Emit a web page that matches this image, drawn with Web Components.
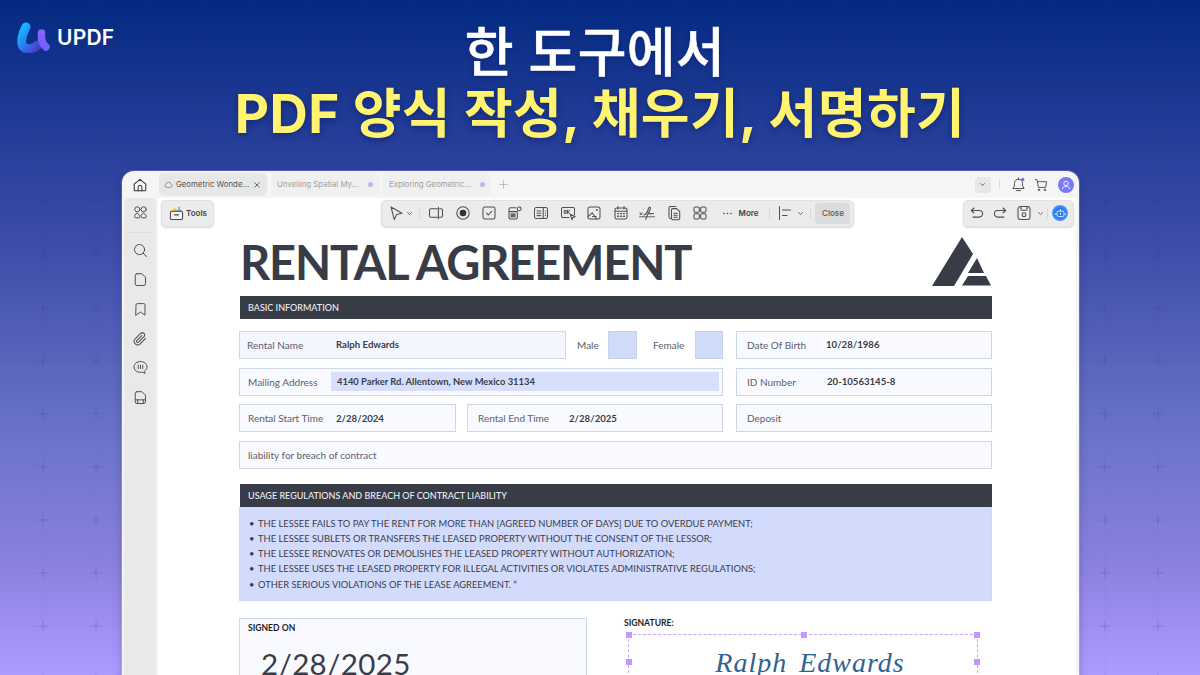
<!DOCTYPE html>
<html lang="ko">
<head>
<meta charset="utf-8">
<title>UPDF</title>
<style>
  html, body { margin: 0; padding: 0; }
  body { width: 1200px; height: 675px; overflow: hidden; font-family: Inter, "Noto Sans CJK KR", sans-serif; }
</style>
</head>
<body>
<promo-page>
  <promo-head></promo-head>
  <app-window>
    <rental-doc></rental-doc>
  </app-window>
</promo-page>

<script>
const ICONS = {
  home: '<path d="M2.2 7.2 8 2.3l5.8 4.9V12.6a1.2 1.2 0 0 1-1.2 1.2H3.4a1.2 1.2 0 0 1-1.2-1.2Z"/><path d="M6.1 13.8V10.3a1.9 1.9 0 0 1 3.8 0v3.5"/>',
  apps: '<circle cx="4.6" cy="4.6" r="2.7"/><circle cx="11.4" cy="4.6" r="2.7"/><path d="M4.6 8.7l2.7 2.6v1.2a1.2 1.2 0 0 1-1.2 1.2H3.100a1.200 1.200 0 0 1-1.200-1.200v-1.200Z"/><path d="M11.400 8.700l2.700 2.600v1.200a1.200 1.200 0 0 1-1.200 1.200h-3a1.200 1.200 0 0 1-1.200-1.200v-1.200Z"/>',
  search: '<circle cx="7" cy="7" r="5.4"/><path d="M11 11l3.300 3.500"/>',
  page: '<path d="M4.200 1.800h5.300l3.800 3.800v7a1.800 1.800 0 0 1-1.800 1.800H4.200a1.800 1.800 0 0 1-1.800-1.800V3.600a1.800 1.800 0 0 1 1.800-1.800Z"/>',
  bookmark: '<path d="M3.200 3a1.300 1.300 0 0 1 1.300-1.300h7A1.300 1.300 0 0 1 12.800 3v11L8 10.700 3.200 14Z"/>',
  clip: '<path vector-effect="non-scaling-stroke" transform="scale(.667)" d="M21.440 11.050l-9.190 9.190a6 6 0 0 1-8.490-8.490l9.190-9.190a4 4 0 0 1 5.660 5.660l-9.200 9.190a2 2 0 0 1-2.830-2.830l8.490-8.480"/>',
  comment: '<path d="M8 1.600c3.900 0 6.900 2.500 6.900 5.800 0 2-1 3.600-2.600 4.600l.5 2.300-2.700-1.400c-.6.200-1.300.3-2.100.3-3.900 0-6.900-2.500-6.900-5.800C1.100 4.100 4.100 1.600 8 1.600Z"/><path d="M5.600 5.500v3.600M8 5.500v3.600M10.400 5.500v3.600"/>',
  filesave: '<path d="M4.200 1.800h5.300l3.800 3.800v7a1.800 1.800 0 0 1-1.800 1.800H4.200a1.800 1.800 0 0 1-1.800-1.800V3.600a1.800 1.800 0 0 1 1.800-1.800Z"/><path d="M2.400 10.500h11M5 14.200v-3.700M11 14.200v-3.700"/>',
  cloud: '<path d="M4.500 13a3 3 0 0 1-.6-5.900 4.200 4.200 0 0 1 8.200 0A3 3 0 0 1 11.500 13Z"/>',
  cursor: '<path d="M3 2l11 6.200-5.300 1.200L6.300 14.500Z"/>',
  textbox: '<path d="M9.300 3.800H3a1.500 1.500 0 0 0-1.500 1.500v5.400A1.500 1.500 0 0 0 3 12.200h6.300M11.600 3.800H13a1.500 1.500 0 0 1 1.500 1.500v5.400a1.500 1.500 0 0 1-1.500 1.500h-1.400M10.400 2.200v11.600"/>',
  record: '<circle cx="8" cy="8" r="6.200"/><circle cx="8" cy="8" r="3.300" fill="#333" stroke="none"/>',
  check: '<rect x="2" y="2" width="12" height="12" rx="1.800"/><path d="M5.500 8.200l1.900 1.800 3.200-3.700"/>',
  form: '<path d="M8.800 2.800H3.500A1.500 1.500 0 0 0 2 4.300v8.200A1.500 1.500 0 0 0 3.500 14h5.300A1.500 1.500 0 0 0 10.300 12.500V7.200M2 6.600h8.300"/><rect x="3.500" y="8.400" width="5" height="4" fill="#666" stroke="none"/><circle cx="12.200" cy="3.900" r="1.900"/>',
  list: '<rect x="1.500" y="2.500" width="13" height="11" rx="1.800"/><path d="M10.200 2.500v11M4 6h3.800M4 8.300h3.800M4 10.600h3.800M12.300 6h.4M12.300 8.300h.4M12.300 10.600h.4"/>',
  okbox: '<path d="M9 12.500H3A1.500 1.500 0 0 1 1.500 11V4A1.500 1.500 0 0 1 3 2.500h10A1.500 1.500 0 0 1 14.500 4v6"/><path d="M4.600 5.500h1.500v2.800H4.600ZM7.400 5.200v3.300M9.800 5.200 7.500 7l2.300 1.500" stroke-width="1"/><path d="M10.300 9.300l4.800 2.500-2.200.6-.9 2.300Z"/>',
  image: '<rect x="2" y="2" width="12" height="12" rx="1.800"/><circle cx="10.800" cy="5" r="1" fill="#555" stroke="none"/><path d="M2.200 11.300 6.200 7.800 10.600 14M6.500 11.500h3.600"/>',
  calendar: '<rect x="2" y="3" width="12" height="11" rx="1.800"/><path d="M2 6.300h12M5 1.500v2.600M11 1.500v2.600"/><path d="M4.700 8.600h.9M7.600 8.600h.9M10.500 8.600h.9M4.700 11.200h.9M7.600 11.200h.9M10.500 11.200h.9" stroke-width="1.400"/>',
  sign: '<path d="M.5 11.800h15" stroke-width=".9"/><path d="M1 7.600l2.200 2.200M3.200 7.600 1 9.800" stroke-width="1"/><path d="M5 10c1.700-.4 3.600-3.200 4.300-6 .4-1.500 1.600-2.500 2.100-1.400C12 3.900 9.600 7.200 8.500 10c-.7 1.800-1.300 3.700-1.900 4.500M9.400 8.700c1.300-.6 1.800-.5 1.800.5 1-.8 2-1 3.500-.5"/>',
  copy: '<path d="M4.700 13.500a1.700 1.700 0 0 1-1.700-1.700V3a1.500 1.500 0 0 1 1.500-1.500h5.300"/><path d="M7 3.600h3.700l3 3v6.600A1.500 1.500 0 0 1 12.200 14.700H7a1.500 1.500 0 0 1-1.500-1.500V5.100A1.500 1.500 0 0 1 7 3.600Z"/><path d="M7.800 8.300h3.500M7.800 10.300h3.500M7.800 12.300h3.500"/>',
  grid: '<rect x="2" y="2" width="5.300" height="5.300" rx="1.300"/><rect x="8.700" y="2" width="5.300" height="5.300" rx="1.300"/><rect x="2" y="8.700" width="5.300" height="5.300" rx="1.300"/><rect x="8.700" y="8.700" width="5.300" height="5.300" rx="1.300"/>',
  dots: '<circle cx="3" cy="8" r="1.200" fill="#444" stroke="none"/><circle cx="8" cy="8" r="1.200" fill="#444" stroke="none"/><circle cx="13" cy="8" r="1.200" fill="#444" stroke="none"/>',
  align: '<path d="M2.500 1.500v13M5.500 5h8M5.500 10.500h4.500"/>',
  chevron: '<path d="M4.600 6.400 8 9.800l3.400-3.400" stroke-width="1.500"/>',
  plus: '<path d="M8 1.500v13M1.500 8h13"/>',
  close: '<path d="M3.500 3.500l9 9M12.500 3.500l-9 9"/>',
  undo: '<path d="M5 3 2.300 5.500 5 8M2.500 5.500h7.800a3.300 3.300 0 0 1 0 6.600H4"/>',
  redo: '<path d="M11 3l2.700 2.500L11 8M13.500 5.500H5.700a3.300 3.300 0 0 0 0 6.600H12"/>',
  save: '<rect x="2" y="1.500" width="12" height="13" rx="2.400"/><path d="M5 1.500v3a.8.8 0 0 0 .8.800h4.400a.8.8 0 0 0 .8-.8v-3"/><circle cx="8" cy="9.700" r="1.900"/>',
  bell: '<path d="M8 2.300c-2.700 0-4.300 2-4.300 4.600v2.600L2 12.300h12l-1.700-2.800V6.900C12.300 4.300 10.700 2.300 8 2.300Z"/><path d="M6 14.500h4M8 .9v1.300"/><circle cx="12.600" cy="2.600" r="1.700" fill="#6c6cf8" stroke="none"/>',
  cart: '<path d="M1.500 1.800h1.900L5 10.800h8.300l1.100-6.600H3.900"/><circle cx="5.600" cy="13.500" r=".9"/><circle cx="12.400" cy="13.500" r=".9"/>'
};

class UiIcon extends HTMLElement {
  connectedCallback() {
    const size = this.getAttribute('size') || 16;
    const sw = this.getAttribute('sw') || 1.05;
    const col = this.getAttribute('color') || '#4f4f4f';
    this.attachShadow({ mode: 'open' }).innerHTML = `
      <style>
        :host { display: inline-flex; flex: none; width: ${size}px; height: ${size}px; }
        svg { width: 100%; height: 100%; fill: none; stroke: ${col}; stroke-width: ${sw}; stroke-linecap: round; stroke-linejoin: round; }
      </style>
      <svg viewBox="0 0 16 16">${ICONS[this.getAttribute('name')] || ''}</svg>`;
  }
}

class PromoPage extends HTMLElement {
  constructor() {
    super();
    this.attachShadow({ mode: 'open' });
  }
  connectedCallback() {
    this.shadowRoot.innerHTML = `
      <style>
        :host {
          display: block;
          position: relative;
          width: 1200px;
          height: 675px;
          overflow: hidden;
          background: linear-gradient(180deg, #032a82 0%, #2c429e 25%, #3d4ca8 36%, #6b74c8 65%, #8a80de 83%, #ae9bff 100%);
        }
        .marks { position: absolute; inset: 0; width: 100%; height: 100%; }
        .flow { position: relative; display: flex; flex-direction: column; height: 100%; }
      </style>
      <svg class="marks">
        <defs>
          <pattern id="p" x="16.500" y="15.500" width="53.100" height="53.100" patternUnits="userSpaceOnUse">
            <path d="M26.500 0V53.100M0 26.500H53.100" stroke="#2a2a80" stroke-opacity=".035" fill="none"/>
            <path d="M26.500 22v9M22 26.500h9" stroke="#2a2a80" stroke-opacity=".16" stroke-width="1.500" fill="none"/>
          </pattern>
        </defs>
        <rect width="1200" height="675" fill="url(#p)"/>
      </svg>
      <div class="flow"><slot></slot></div>`;
  }
}

class PromoHead extends HTMLElement {
  constructor() {
    super();
    this.attachShadow({ mode: 'open' });
  }
  connectedCallback() {
    this.shadowRoot.innerHTML = `
      <style>
        :host {
          display: grid;
          grid-template-columns: 1fr auto 1fr;
          height: 171px;
          box-sizing: border-box;
          padding: 22px 0 0 0;
          flex: none;
        }
        .logo { display: flex; align-items: flex-start; gap: 6px; margin: -2px 0 0 15px; }
        .logo svg { width: 36px; height: 33px; flex: none; }
        .logo span { color: #fff; font: 600 21px/33px Inter, sans-serif; letter-spacing: .2px; margin-top: 1px; }
        h1 { margin: 0; text-align: center; font-family: Inter, "Noto Sans CJK KR", sans-serif; font-weight: 700; letter-spacing: .4px; white-space: nowrap; }
        .a { display: block; color: #fff; font-size: 53px; line-height: 62px; font-weight: 500; padding-right: 10px; -webkit-text-stroke: .6px #fff; text-shadow: 0 2px 5px rgba(5,15,80,.35); }
        .b { display: block; color: #fff36f; font-size: 53px; line-height: 60px; text-shadow: 0 2px 6px rgba(5,15,80,.45); }
      </style>
      <div class="logo">
        <svg viewBox="0 0 36 33">
          <defs>
            <linearGradient id="lg" x1="0" y1="0" x2="1" y2="1">
              <stop offset="0" stop-color="#12bdfc"/><stop offset=".5" stop-color="#2b78f0"/><stop offset="1" stop-color="#4a3fc8"/>
            </linearGradient>
            <linearGradient id="lg2" x1="0" y1="0" x2="0" y2="1">
              <stop offset="0" stop-color="#8762ff"/><stop offset="1" stop-color="#7460ff"/>
            </linearGradient>
          </defs>
          <path d="M11 7C8 13 6 19 7 24c1 6 10 6 16 1" fill="none" stroke="url(#lg)" stroke-width="9" stroke-linecap="round"/>
          <path d="M26.500 13c-.5 6 .5 11 4.500 14" fill="none" stroke="url(#lg2)" stroke-width="7.500" stroke-linecap="round"/>
        </svg>
        <span>UPDF</span>
      </div>
      <h1><span class="a">한 도구에서</span><span class="b">PDF 양식 작성, 채우기, 서명하기</span></h1>
      <div></div>`;
  }
}

class TabItem extends HTMLElement {
  constructor() {
    super();
    this.attachShadow({ mode: 'open' });
  }
  connectedCallback() {
    const active = this.hasAttribute('active');
    this.shadowRoot.innerHTML = `
      <style>
        :host {
          display: flex;
          align-items: center;
          width: 108px;
          height: 23px;
          box-sizing: border-box;
          padding: 0 6px 0 ${active ? 5 : 6}px;
          border-radius: 5px;
          background: ${active ? '#e7e7e7' : '#f0f0f0'};
          color: ${active ? '#555' : '#a0a0a0'};
          font: 400 7.800px/1 Inter, sans-serif;
          white-space: nowrap;
        }
        .txt { flex: 1; padding-left: ${active ? '3px' : '0'}; }
        .dot { width: 5px; height: 5px; border-radius: 50%; background: #b6b6f6; }
      </style>
      ${active ? '<ui-icon name="cloud" size="9" color="#666"></ui-icon>' : ''}
      <span class="txt"><slot></slot></span>
      ${active ? '<ui-icon name="close" size="8" color="#555" sw="1.700"></ui-icon>' : '<span class="dot"></span>'}`;
  }
}

class ToolGroup extends HTMLElement {
  constructor() {
    super();
    this.attachShadow({ mode: 'open' });
  }
  connectedCallback() {
    this.shadowRoot.innerHTML = `
      <style>
        :host {
          display: flex;
          align-items: center;
          flex: none;
          height: 27px;
          box-sizing: border-box;
          background: #ebebeb;
          border-radius: 5px;
          border: 1px solid #e2e2e2;
          box-shadow: 0 1px 2px rgba(0,0,0,.16);
          color: #444;
          font: 600 8px/1 Inter, sans-serif;
        }
      </style>
      <slot></slot>`;
  }
}

class AppWindow extends HTMLElement {
  constructor() {
    super();
    this.attachShadow({ mode: 'open' });
  }
  connectedCallback() {
    const tool = (name, w) => `<span class="t" style="width:${w}px"><ui-icon name="${name}" size="16"></ui-icon></span>`;
    const chev = (w) => `<span class="t" style="width:${w}px"><ui-icon name="chevron" size="9"></ui-icon></span>`;
    this.shadowRoot.innerHTML = `
      <style>
        :host {
          display: block;
          flex: none;
          width: 957px;
          height: 560px;
          margin-left: 122px;
          background: #f5f5f5;
          border-radius: 12px 12px 0 0;
          box-shadow: 0 0 0 1px rgba(255,255,255,.18), 0 2px 10px rgba(10,20,90,.25);
          overflow: hidden;
        }
        .tabs { display: flex; align-items: center; height: 27px; box-sizing: border-box; padding: 0 5px 0 10px; }
        .tabs .home { margin-right: 11px; }
        .tabs tab-item { margin-right: 4px; }
        .add { margin-left: 4px; }
        .right { margin-left: auto; display: flex; align-items: center; }
        .drop { display: flex; align-items: center; justify-content: center; width: 16px; height: 16px; background: #e7e7e7; border-radius: 4px; }
        .rule { width: 1px; height: 9px; background: #dcdcdc; flex: none; }
        .avatar { display: flex; align-items: center; justify-content: center; width: 16px; height: 16px; border-radius: 50%; background: #7b7bfa; margin-left: 10px; }
        .body { display: flex; height: 533px; }
        .rail {
          flex: none;
          width: 32px;
          margin: 0 2px 0 2px;
          padding-top: 7px;
          box-sizing: border-box;
          background: #e9e9e9;
          border-radius: 5px 5px 0 0;
          display: flex;
          flex-direction: column;
          align-items: center;
        }
        .rail ui-icon { margin-bottom: 14.700px; }
        .rail .sep { width: 24px; height: 1px; background: #dedede; margin: -3px 0 10px; }
        .main { flex: none; width: 918px; background: #fff; position: relative; }
        .bar { display: flex; align-items: center; height: 29px; padding: 1px 0 0 3px; box-sizing: border-box; }
        .tools { width: 53px; padding-left: 7px; gap: 2px; box-sizing: border-box; }
        .mid { width: 473px; margin-left: 167px; padding-left: 6px; box-sizing: border-box; }
        .end { width: 111px; margin-left: 109px; padding-left: 5px; box-sizing: border-box; }
        .t { display: inline-flex; justify-content: center; flex: none; }
        .v { width: 1px; height: 9px; background: #d8d8d8; flex: none; }
        .closeb { display: flex; align-items: center; justify-content: center; width: 35px; height: 21px; border-radius: 3px; background: #dcdcdc; color: #555; font-weight: 500; margin-left: 4px; }
        .ai { display: flex; align-items: center; justify-content: center; width: 16px; height: 16px; border-radius: 50%; background: radial-gradient(circle, #2b7cf0 45%, #7cc4ff 100%); margin-left: 4px; }
      </style>
      <div class="tabs">
        <ui-icon class="home" name="home" size="16" color="#333"></ui-icon>
        <tab-item active>Geometric Wonde...</tab-item>
        <tab-item>Unveiling Spatial My...</tab-item>
        <tab-item>Exploring Geometric...</tab-item>
        <ui-icon class="add" name="plus" size="9" color="#aaa" sw="1.300"></ui-icon>
        <div class="right">
          <span class="drop"><ui-icon name="chevron" size="9"></ui-icon></span>
          <span class="rule" style="margin:0 11px 0 8px"></span>
          <ui-icon name="bell" size="15"></ui-icon>
          <ui-icon name="cart" size="14" style="margin-left:8.500px"></ui-icon>
          <span class="avatar">
            <svg width="10" height="10" viewBox="0 0 16 16" fill="none" stroke="#fff" stroke-width="1.400"><circle cx="8" cy="5.500" r="3.500"/><path d="M2 14.500c.6-3 3-4.500 6-4.500s5.400 1.500 6 4.500"/></svg>
          </span>
        </div>
      </div>
      <div class="body">
        <div class="rail">
          <ui-icon name="apps" size="15"></ui-icon>
          <span class="sep"></span>
          <ui-icon name="search" size="15"></ui-icon>
          <ui-icon name="page" size="15"></ui-icon>
          <ui-icon name="bookmark" size="15"></ui-icon>
          <ui-icon name="clip" size="14"></ui-icon>
          <ui-icon name="comment" size="15"></ui-icon>
          <ui-icon name="filesave" size="15"></ui-icon>
        </div>
        <div class="main">
          <div class="bar">
            <tool-group class="tools">
              <svg width="15" height="15" viewBox="0 0 16 16" fill="none" style="flex:none">
                <path d="M2.500 5.500C3 3.500 4.500 3.800 5.200 2.800c1.200-1 3-.6 3.800 2.700Z" fill="#f7c62f"/>
                <path d="M9 5.500c.2-1.500 1.500-2.200 2.800-1.900 1 .3 1.700 1 1.700 1.900Z" fill="#35b4e8"/><circle cx="10.800" cy="2" r="1" fill="#4a8fe8"/>
                <rect x="1.500" y="5.500" width="13" height="9" rx="1.800" stroke="#444" stroke-width="1.100" fill="#f4f4f4"/><path d="M5.500 9.500h5" stroke="#444" stroke-width="1.300"/>
              </svg>
              <span>Tools</span>
            </tool-group>
            <tool-group class="mid">
              ${tool('cursor', 16)}${chev(11)}<span class="v" style="margin:0 3px 0 4px"></span>
              ${tool('textbox', 26.500)}${tool('record', 26)}${tool('check', 26)}${tool('form', 26.500)}${tool('list', 26.500)}${tool('okbox', 26.500)}${tool('image', 26.500)}${tool('calendar', 26.500)}${tool('sign', 26.500)}${tool('copy', 26.500)}${tool('grid', 26.500)}
              <span class="t" style="width:12px;margin-left:8px"><ui-icon name="dots" size="11"></ui-icon></span>
              <span style="margin-left:5px">More</span>
              <span class="v" style="margin:0 8px 0 11px"></span>
              ${tool('align', 14)}${chev(16)}
              <span class="v" style="margin-left:2px"></span>
              <span class="closeb">Close</span>
            </tool-group>
            <tool-group class="end">
              ${tool('undo', 16)}<span style="width:7px"></span>${tool('redo', 16)}<span style="width:8px"></span>${tool('save', 16)}${chev(16)}
              <span class="v" style="margin-left:-1px"></span>
              <span class="ai"><svg width="11" height="11" viewBox="0 0 16 16" fill="none" stroke="#e6f2ff" stroke-width="1.300"><rect x="3" y="4.500" width="10" height="8" rx="2"/><path d="M8 4.500V2M1 7.500v2.500M15 7.500v2.500M8 7v3"/></svg></span>
            </tool-group>
          </div>
          <slot></slot>
        </div>
      </div>`;
  }
}

class SectionBar extends HTMLElement {
  constructor() {
    super();
    this.attachShadow({ mode: 'open' });
  }
  connectedCallback() {
    this.shadowRoot.innerHTML = `
      <style>
        :host {
          display: flex;
          align-items: center;
          height: 22.500px;
          margin-left: 1px;
          padding-left: 8px;
          background: #383c47;
          color: #eceef4;
          font: 500 9px/1 var(--doc-font);
        }
      </style>
      <slot></slot>`;
  }
}

class FormField extends HTMLElement {
  constructor() {
    super();
    this.attachShadow({ mode: 'open' });
  }
  connectedCallback() {
    const w = this.getAttribute('label-w') || 79;
    const bg = this.getAttribute('bg') || '#f9faff';
    const pad = this.getAttribute('pad') || 8;
    this.shadowRoot.innerHTML = `
      <style>
        :host {
          display: flex;
          align-items: center;
          box-sizing: border-box;
          height: 28px;
          padding-left: ${pad}px;
          border: 1px solid #cdd7e6;
          background: ${bg};
          font: 400 10px/1 var(--doc-font);
          color: #5d606b;
          white-space: nowrap;
        }
        .l { flex: none; width: ${w}px; }
        .v { color: #3a3d48; font-weight: 700; font-size: 9.600px; flex: 1; }
      </style>
      <span class="l">${this.getAttribute('label')}</span>
      <span class="v"><slot></slot></span>`;
  }
}

class RentalDoc extends HTMLElement {
  constructor() {
    super();
    this.attachShadow({ mode: 'open' });
  }
  connectedCallback() {
    this.shadowRoot.innerHTML = `
      <style>
        :host {
          display: block;
          width: 753px;
          margin-left: 81px;
          --doc-font: Lato, "Noto Sans", sans-serif;
          font-family: var(--doc-font);
        }
        .top { display: flex; justify-content: space-between; height: 69px; padding: 5px 0 0 1px; box-sizing: border-box; }
        h2 { margin: 0; color: #383c47; font: 700 47px/60px Lato, sans-serif; letter-spacing: -1.150px; white-space: nowrap; }
        .top svg { width: 60px; height: 49px; margin-top: 5px; flex: none; }
        .grid { display: grid; grid-template-columns: 484px 256px; column-gap: 13px; row-gap: 8.700px; margin-top: 12.500px; }
        .row { display: flex; }
        .tick { display: block; box-sizing: border-box; height: 28px; background: #d0daf9; border: 1px solid #c6d2f1; flex: none; }
        .cap { font-size: 10px; color: #5d606b; align-self: center; flex: none; }
        .address { background: #d8dffc; height: 19px; display: flex; align-items: center; padding-left: 6px; margin-right: 3px; font-size: 9.400px; }
        .wide { grid-column: 1 / -1; }
        .sec2 { margin-top: 15px; }
        .panel {
          box-sizing: border-box;
          height: 94px;
          padding: 9px 0 0 9px;
          background: #d3dbfd;
          border: 1px solid #cdd7f2;
          border-top: 0;
          list-style: none;
          margin: 0;
          color: #3a3d48;
          font: 400 9.350px/15.300px var(--doc-font);
          white-space: nowrap;
        }
        .panel li { display: flex; }
        .panel li::before { content: "•"; width: 9px; flex: none; }
        .sign { display: flex; margin-top: 17px; }
        .signed { box-sizing: border-box; width: 348px; height: 90px; padding: 4px 0 0 8px; border: 1px solid #cbd9e8; background: #f9faff; flex: none; }
        .lab { color: #1d1f26; font: 700 8.600px/11px var(--doc-font); }
        .date { margin: 19px 0 0 13px; color: #3a3d48; font: 400 29.500px/22px var(--doc-font); letter-spacing: .35px; }
        .sigwrap { margin-left: 37px; width: 360px; }
        .sigwrap .lab { height: 13px; }
        .sel { position: relative; margin: 3px 0 0 4px; width: 350px; height: 80px; box-sizing: border-box; border: 1.500px dashed #c8a2ff; display: flex; justify-content: center; padding-left: 14px; }
        .sel i { position: absolute; width: 6px; height: 6px; background: #c596ff; }
        .who { color: #2f6391; font: italic 400 28px/22px "Liberation Serif", serif; margin-top: 17px; letter-spacing: 1px; word-spacing: 4px; }
      </style>
      <div class="top">
        <h2>RENTAL AGREEMENT</h2>
        <svg viewBox="0 0 60 49" fill="#383c47">
          <path d="M30 0 41 17 22 49H0Z"/><path d="M45 21l7 15H36Z"/><path d="M36 39H54l5 9.500H30Z"/>
        </svg>
      </div>
      <section-bar>BASIC INFORMATION</section-bar>
      <div class="grid">
        <div class="row">
          <form-field label="Rental Name" label-w="89" pad="7" bg="#f3f5ff" style="width:327px;flex:none;">Ralph Edwards</form-field>
          <span class="cap" style="margin-left:11px;width:21px;">Male</span>
          <span class="tick" style="margin-left:10px;width:29px;"></span>
          <span class="cap" style="margin-left:16px;width:31px;">Female</span>
          <span class="tick" style="margin-left:11px;width:28px;"></span>
        </div>
        <form-field label="Date Of Birth" label-w="79" pad="10">10/28/1986</form-field>
        <form-field label="Mailing Address" label-w="83"><span class="address">4140 Parker Rd. Allentown, New Mexico 31134</span></form-field>
        <form-field label="ID Number" label-w="80" pad="10">20-10563145-8</form-field>
        <div class="row" style="gap:11px;">
          <form-field label="Rental Start Time" label-w="88" style="width:217px;flex:none;">2/28/2024</form-field>
          <form-field label="Rental End Time" label-w="91" pad="10" style="flex:1;">2/28/2025</form-field>
        </div>
        <form-field label="Deposit" pad="10"></form-field>
        <form-field class="wide" label="liability for breach of contract" label-w="300"></form-field>
      </div>
      <section-bar class="sec2">USAGE REGULATIONS AND BREACH OF CONTRACT LIABILITY</section-bar>
      <ul class="panel">
        <li>THE LESSEE FAILS TO PAY THE RENT FOR MORE THAN [AGREED NUMBER OF DAYS] DUE TO OVERDUE PAYMENT;</li>
        <li>THE LESSEE SUBLETS OR TRANSFERS THE LEASED PROPERTY WITHOUT THE CONSENT OF THE LESSOR;</li>
        <li>THE LESSEE RENOVATES OR DEMOLISHES THE LEASED PROPERTY WITHOUT AUTHORIZATION;</li>
        <li>THE LESSEE USES THE LEASED PROPERTY FOR ILLEGAL ACTIVITIES OR VIOLATES ADMINISTRATIVE REGULATIONS;</li>
        <li>OTHER SERIOUS VIOLATIONS OF THE LEASE AGREEMENT. “</li>
      </ul>
      <div class="sign">
        <div class="signed">
          <div class="lab">SIGNED ON</div>
          <div class="date">2/28/2025</div>
        </div>
        <div class="sigwrap">
          <div class="lab">SIGNATURE:</div>
          <div class="sel">
            <i style="left:-3px;top:-3px"></i><i style="left:172px;top:-3px"></i><i style="right:-3px;top:-3px"></i>
            <i style="left:-3px;top:24px"></i><i style="right:-3px;top:24px"></i>
            <span class="who">Ralph Edwards</span>
          </div>
        </div>
      </div>`;
  }
}

customElements.define('ui-icon', UiIcon);
customElements.define('promo-page', PromoPage);
customElements.define('promo-head', PromoHead);
customElements.define('tab-item', TabItem);
customElements.define('tool-group', ToolGroup);
customElements.define('app-window', AppWindow);
customElements.define('section-bar', SectionBar);
customElements.define('form-field', FormField);
customElements.define('rental-doc', RentalDoc);
</script>
</body>
</html>
